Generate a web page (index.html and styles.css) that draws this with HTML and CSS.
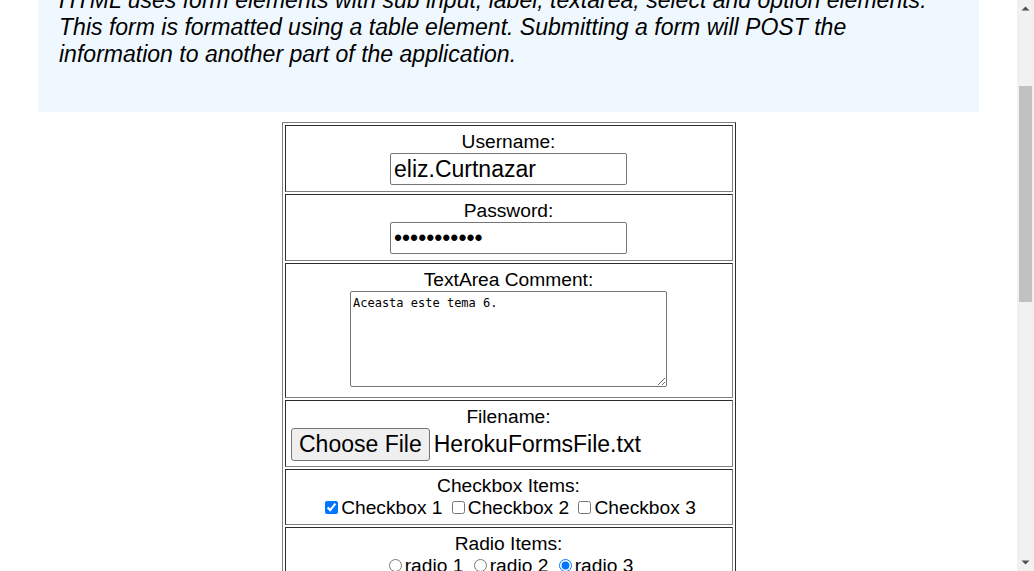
FILE: index.html
```html
<!DOCTYPE html>
<html lang="en">
<head>
<meta charset="utf-8">
<title>Basic HTML Form Example</title>
<link rel="stylesheet" href="styles.css">
</head>
<body>
<div class="viewport">
  <main class="page">
    <div class="explanation">
      <p>HTML uses form elements with sub input, label, textarea, select and option elements. This form is formatted using a table element. Submitting a form will POST the information to another part of the application.</p>
    </div>
    <form class="form" action="#" method="post">
      <table class="form-table">
        <tr><td class="cell">
          <span class="cell-label">Username:</span>
          <input class="text-input" type="text" name="username" value="eliz.Curtnazar">
        </td></tr>
        <tr><td class="cell">
          <span class="cell-label">Password:</span>
          <input class="text-input" type="password" name="password" value="abcdefghijk">
        </td></tr>
        <tr><td class="cell cell-area">
          <span class="cell-label">TextArea Comment:</span>
          <textarea class="comment" name="comments">Aceasta este tema 6.</textarea>
        </td></tr>
        <tr><td class="cell cell-file">
          <span class="cell-label">Filename:</span>
          <div class="file-field">
            <button type="button" class="file-btn">Choose File</button>
            <span class="file-name">HerokuFormsFile.txt</span>
          </div>
        </td></tr>
        <tr><td class="cell cell-choices">
          <span class="cell-label">Checkbox Items:</span>
          <div class="choice-line"><input class="choice" type="checkbox" checked>Checkbox 1 <input class="choice" type="checkbox">Checkbox 2 <input class="choice" type="checkbox">Checkbox 3</div>
        </td></tr>
        <tr><td class="cell cell-choices">
          <span class="cell-label">Radio Items:</span>
          <div class="choice-line"><input class="choice radio" type="radio" name="radio">radio 1 <input class="choice radio" type="radio" name="radio">radio 2 <input class="choice radio" type="radio" name="radio" checked>radio 3</div>
        </td></tr>
        <tr><td class="cell">
          <span class="cell-label">Multiple Select Values:</span>
          <select class="multi" multiple>
            <option>Selection Item 1</option>
            <option>Selection Item 2</option>
            <option>Selection Item 3</option>
            <option selected>Selection Item 4</option>
          </select>
        </td></tr>
      </table>
    </form>
  </main>
  <div class="scrollbar" aria-hidden="true">
    <div class="sb-btn">
      <svg width="17" height="17" viewBox="0 0 17 17"><path d="M4.5 10.5 L8.5 6.5 L12.5 10.5 Z" fill="#505050"/></svg>
    </div>
    <div class="sb-track"><div class="sb-thumb"></div></div>
    <div class="sb-btn">
      <svg width="17" height="17" viewBox="0 0 17 17"><path d="M4.5 6.5 L8.5 10.5 L12.5 6.5 Z" fill="#505050"/></svg>
    </div>
  </div>
</div>
</body>
</html>
```
FILE: styles.css
```css
html, body {
  margin: 0;
  padding: 0;
  background: #ffffff;
}

body {
  font-family: "Liberation Sans", Arial, sans-serif;
  font-size: 19.2px;
  color: #000000;
}

.viewport {
  display: flex;
  width: 1034px;
  height: 571px;
  overflow: hidden;
}

.page {
  flex: 1;
  min-width: 0;
  padding: 0 8px;
  margin-top: -13px;
}

.explanation {
  margin: 0 30px;
  padding: 0 20px 44px 21px;
  background: #f0f8ff;
}

.explanation p {
  margin: 0;
  font-style: italic;
  font-size: 23.04px;
  line-height: 27px;
}

.form {
  margin: 0;
}

.form-table {
  width: 454px;
  margin: 10px auto 0;
  border: 1px outset gray;
  border-spacing: 2px;
  border-collapse: separate;
}

.cell {
  border: 1px inset gray;
  padding: 5px 1px 6px;
  text-align: center;
  line-height: 22px;
}

.cell-label {
  display: block;
  height: 22px;
  line-height: 22px;
}

.text-input {
  display: block;
  box-sizing: border-box;
  width: 237px;
  height: 32px;
  margin: 0 auto;
  padding: 1px 3px;
  border: 1px solid #767676;
  border-radius: 2px;
  font-family: "Liberation Sans", Arial, sans-serif;
  font-size: 23px;
  color: #000;
  background: #fff;
}

.cell-area {
  padding-bottom: 10px;
}

.comment {
  display: block;
  box-sizing: border-box;
  width: 317px;
  height: 96px;
  margin: 0 auto;
  padding: 4px 2px 2px;
  border: 1px solid #767676;
  border-radius: 2px;
  font-family: "DejaVu Sans Mono", "Liberation Mono", monospace;
  font-size: 12px;
  line-height: 14px;
  color: #000;
}

.cell-file {
  padding-bottom: 5px;
}

.file-field {
  display: flex;
  align-items: baseline;
  gap: 4px;
  width: 435px;
  margin: 0 auto;
  font-size: 23px;
  line-height: 31px;
}

.file-btn {
  box-sizing: border-box;
  height: 33px;
  margin: 0;
  padding: 0 7px;
  border: 1px solid #767676;
  border-radius: 3px;
  background: #efefef;
  font-family: "Liberation Sans", Arial, sans-serif;
  font-size: 23px;
  color: #000;
}

.file-name {
  white-space: nowrap;
}

.cell-choices {
  padding-bottom: 5px;
}

.choice-line {
  line-height: 22px;
  white-space: nowrap;
}

.choice {
  width: 13px;
  height: 13px;
  margin: 3px 3px 0 4px;
  vertical-align: baseline;
}

.choice.radio {
  margin: 3px 3px 0 5px;
}

.multi {
  margin-top: 2px;
  font-family: "Liberation Sans", Arial, sans-serif;
  font-size: 16px;
}

.scrollbar {
  flex: 0 0 17px;
  display: flex;
  flex-direction: column;
  background: #f1f1f1;
}

.sb-btn {
  flex: 0 0 17px;
  height: 17px;
}

.sb-btn svg {
  display: block;
}

.sb-track {
  flex: 1;
}

.sb-thumb {
  height: 216px;
  margin: 69px 2px 0;
  background: #c1c1c1;
}
```
